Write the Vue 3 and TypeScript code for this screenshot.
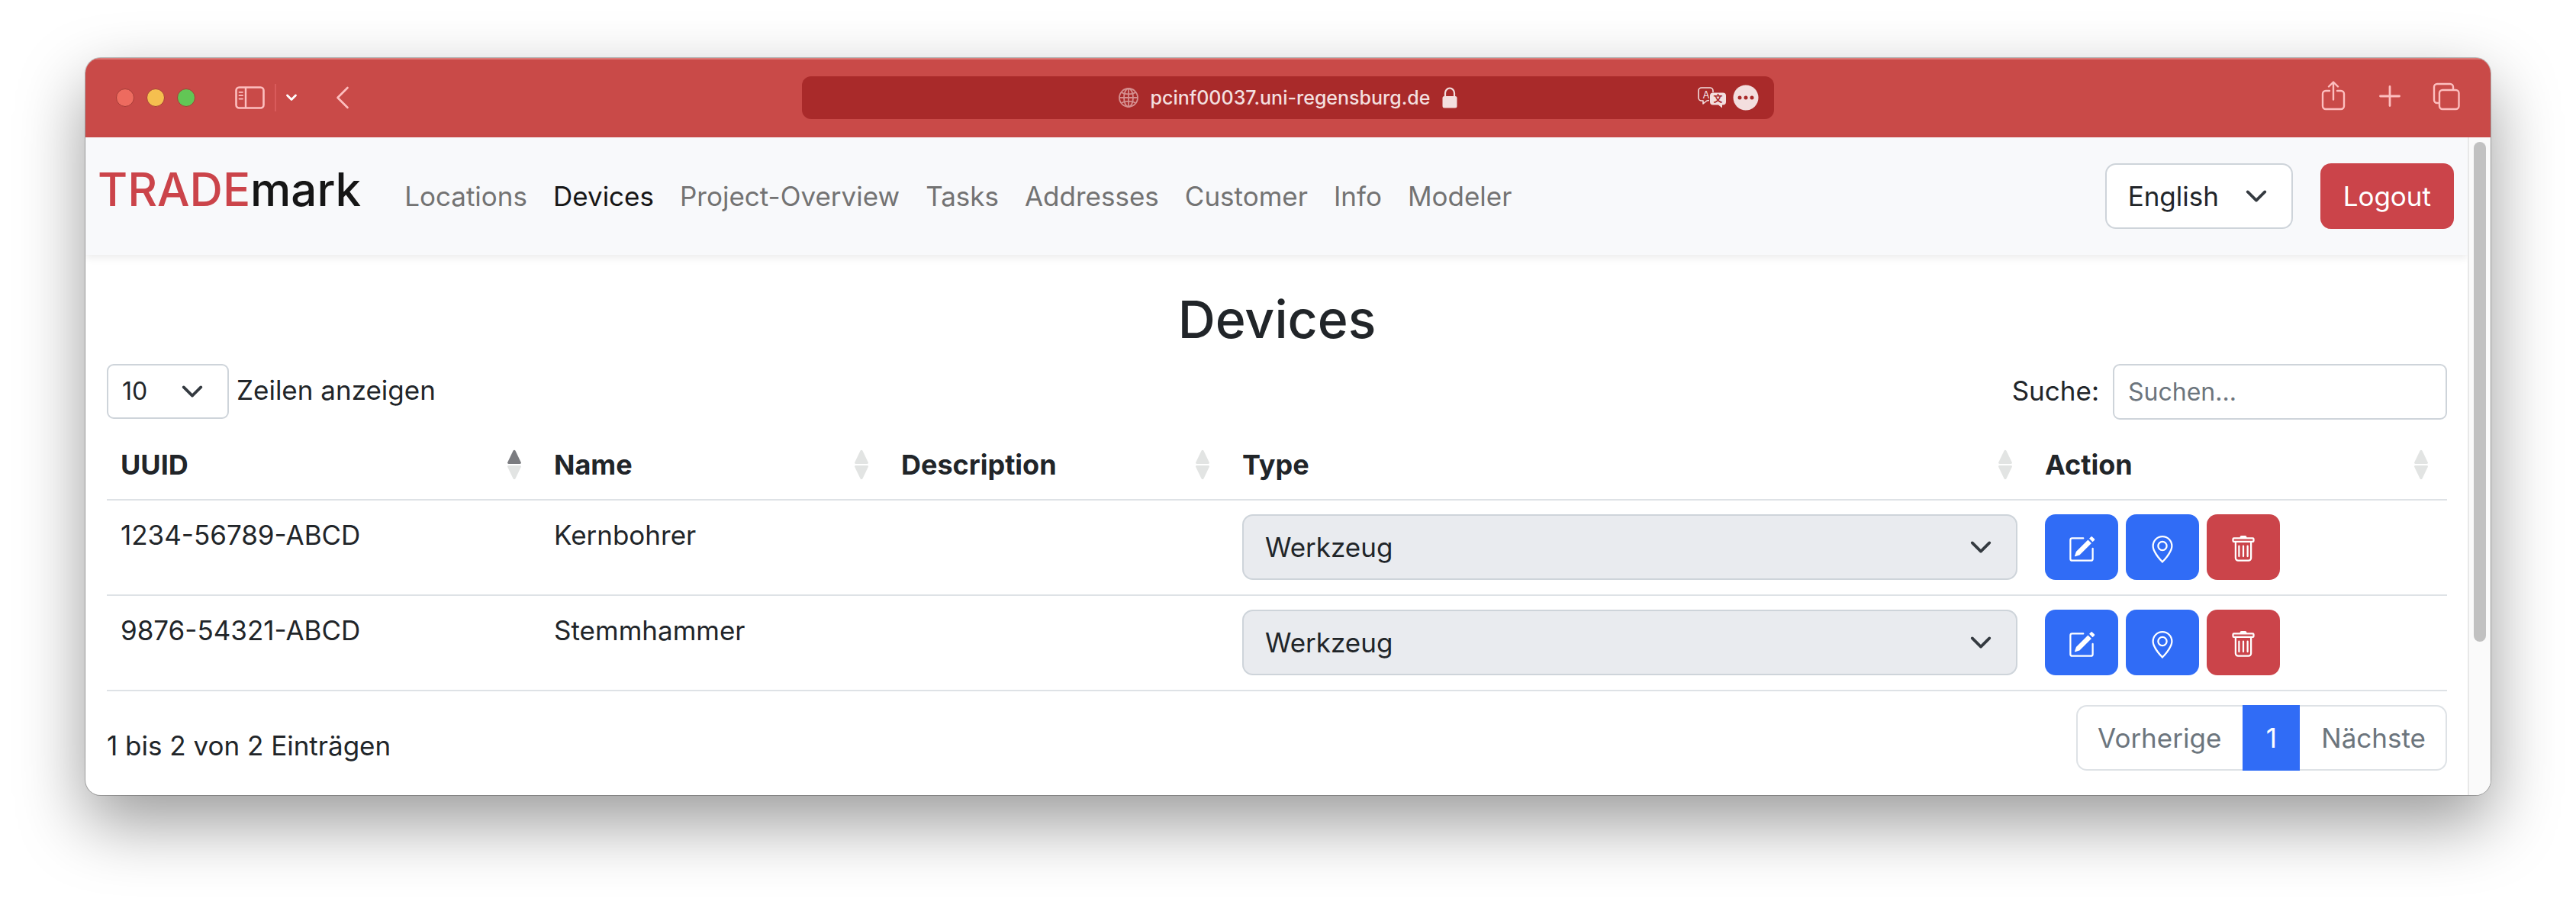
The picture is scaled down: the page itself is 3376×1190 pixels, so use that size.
<script setup lang="ts">
import { ref } from 'vue'

interface Column {
  label: string
  width: number
}

interface Device {
  uuid: string
  name: string
  description: string
  type: string
}

const navItems = ['Locations', 'Devices', 'Project-Overview', 'Tasks', 'Addresses', 'Customer', 'Info', 'Modeler']
const activeItem = ref('Devices')

const columns: Column[] = [
  { label: 'UUID', width: 568 },
  { label: 'Name', width: 455 },
  { label: 'Description', width: 447 },
  { label: 'Type', width: 1052 },
  { label: 'Action', width: 545 },
]
const totalWidth = columns.reduce((sum, c) => sum + c.width, 0)
const sortedColumn = ref('UUID')

const devices: Device[] = [
  { uuid: '1234-56789-ABCD', name: 'Kernbohrer', description: '', type: 'Werkzeug' },
  { uuid: '9876-54321-ABCD', name: 'Stemmhammer', description: '', type: 'Werkzeug' },
]

const language = ref('English')
const pageLength = ref('10')
const search = ref('')
</script>

<template>
  <div class="desktop">
    <div class="window">
      <header class="titlebar">
        <div class="tools">
          <div class="lights">
            <span class="light close"></span>
            <span class="light minimize"></span>
            <span class="light maximize"></span>
          </div>
          <button class="tool sidebar" type="button" aria-label="Sidebar">
            <svg width="40" height="30" viewBox="0 0 40 30" fill="none" stroke="currentColor">
              <rect x="1.5" y="1.5" width="36" height="27" rx="4" stroke-width="2.6" />
              <path d="M14 1.500V28.500" stroke-width="2.4" />
              <path d="M5.500 7.800h4.500M5.500 12.200h4.500M5.500 16.600h4.500" stroke-width="1.800" stroke-linecap="round" />
            </svg>
          </button>
          <span class="divider"></span>
          <button class="tool menu" type="button" aria-label="Tab groups">
            <svg width="16" height="12" viewBox="0 0 16 12" fill="none" stroke="currentColor" stroke-width="2.8" stroke-linecap="round" stroke-linejoin="round">
              <path d="M2.500 3l5.500 5.500L13.500 3" />
            </svg>
          </button>
          <button class="tool back" type="button" aria-label="Back">
            <svg width="18" height="30" viewBox="0 0 18 30" fill="none" stroke="currentColor" stroke-width="2.600" stroke-linecap="round" stroke-linejoin="round">
              <path d="M15.500 2L2.500 15l13 13" />
            </svg>
          </button>
        </div>

        <div class="address">
          <span></span>
          <div class="url">
            <svg class="globe" width="26" height="26" viewBox="0 0 26 26" fill="none" stroke="currentColor" stroke-width="1.800">
              <circle cx="13" cy="13" r="12" />
              <ellipse cx="13" cy="13" rx="6" ry="12" />
              <path d="M13 1v24M1 13h24M3.500 6c5 3.200 14 3.200 19 0M3.500 20c5-3.200 14-3.200 19 0" />
            </svg>
            <span>pcinf00037.uni-regensburg.de</span>
            <svg width="20" height="28" viewBox="0 0 20 28">
              <rect x="0.500" y="12" width="19" height="15.500" rx="2.500" fill="currentColor" />
              <path d="M4 13V8a6 6.500 0 0 1 12 0v5" fill="none" stroke="currentColor" stroke-width="2.200" />
            </svg>
          </div>
          <div class="url-actions">
            <svg width="38" height="28" viewBox="0 0 38 28">
              <path d="M15 17.500l-3 .5-5 4v-4H5a4 4 0 0 1-4-4V5a4 4 0 0 1 4-4h11a4 4 0 0 1 4 4v2" fill="none" stroke="currentColor" stroke-width="1.600" stroke-linejoin="round" />
              <text x="11" y="14.500" text-anchor="middle" font-size="13" fill="currentColor">A</text>
              <path d="M20 7.500h13a4 4 0 0 1 4 4v8a4 4 0 0 1-4 4h-1v4l-5-4h-7a4 4 0 0 1-4-4v-8a4 4 0 0 1 4-4z" fill="currentColor" />
              <text x="26.500" y="20" text-anchor="middle" font-size="12" font-weight="700" fill="#a92a2a">文</text>
            </svg>
            <svg width="34" height="34" viewBox="0 0 34 34">
              <circle cx="17" cy="17" r="16.500" fill="currentColor" />
              <g fill="#a92a2a">
                <circle cx="9" cy="17" r="2.500" />
                <circle cx="17" cy="17" r="2.500" />
                <circle cx="25" cy="17" r="2.500" />
              </g>
            </svg>
          </div>
        </div>

        <div class="tools end">
          <button class="tool" type="button" aria-label="Share">
            <svg width="36" height="40" viewBox="0 0 36 40" fill="none" stroke="currentColor" stroke-width="2.400" stroke-linecap="round" stroke-linejoin="round">
              <path d="M13 14H8a4 4 0 0 0-4 4v16a4 4 0 0 0 4 4h20a4 4 0 0 0 4-4V18a4 4 0 0 0-4-4h-5M18 25.500V3M12 8.500L18 2.500l6 6" />
            </svg>
          </button>
          <button class="tool" type="button" aria-label="New tab">
            <svg width="36" height="40" viewBox="0 0 36 40" fill="none" stroke="currentColor" stroke-width="2.800" stroke-linecap="round">
              <path d="M18 8.500v25M5.500 21h25" />
            </svg>
          </button>
          <button class="tool" type="button" aria-label="Tab overview">
            <svg width="36" height="40" viewBox="0 0 36 40" fill="none" stroke="currentColor" stroke-width="2.400">
              <rect x="9" y="13" width="25.500" height="25" rx="4" />
              <path d="M9 30H6a4 4 0 0 1-4-4V9a4 4 0 0 1 4-4h17a4 4 0 0 1 4 4v4" />
            </svg>
          </button>
        </div>
      </header>

      <div class="viewport">
        <div class="page">
          <nav class="navbar">
            <a class="brand" href="#"><span class="brand-accent">TRADE</span>mark</a>
            <ul class="nav-list">
              <li v-for="item in navItems" :key="item">
                <a class="nav-link" :class="{ active: item === activeItem }" href="#" @click.prevent="activeItem = item">{{ item }}</a>
              </li>
            </ul>
            <div class="nav-end">
              <div class="select language">
                <select v-model="language" aria-label="Language">
                  <option>English</option>
                  <option>Deutsch</option>
                </select>
                <svg class="chevron" viewBox="0 0 16 16" aria-hidden="true"><path d="m2 5 6 6 6-6" /></svg>
              </div>
              <button class="btn logout" type="button">Logout</button>
            </div>
          </nav>

          <main class="content">
            <h2>Devices</h2>

            <div class="controls">
              <div class="field">
                <div class="select small">
                  <select id="page-length" v-model="pageLength">
                    <option>10</option>
                    <option>25</option>
                    <option>50</option>
                  </select>
                  <svg class="chevron" viewBox="0 0 16 16" aria-hidden="true"><path d="m2 5 6 6 6-6" /></svg>
                </div>
                <label for="page-length">Zeilen anzeigen</label>
              </div>
              <div class="field search">
                <label for="search">Suche:</label>
                <input id="search" v-model="search" type="search" placeholder="Suchen..." />
              </div>
            </div>

            <table>
              <colgroup>
                <col v-for="c in columns" :key="c.label" :style="{ width: (c.width / totalWidth) * 100 + '%' }" />
              </colgroup>
              <thead>
                <tr>
                  <th v-for="c in columns" :key="c.label" scope="col">
                    <div class="head">
                      <span>{{ c.label }}</span>
                      <svg class="sort" :class="{ ascending: c.label === sortedColumn }" viewBox="0 0 20 40" aria-hidden="true">
                        <path class="up" d="M8.500 1.800q1.500-2.200 3 0L18.800 17q.6 2-1.300 2h-15q-1.900 0-1.300-2z" />
                        <path d="M8.500 38.200q1.500 2.200 3 0L18.800 23q.6-2-1.300-2h-15q-1.900 0-1.300 2z" />
                      </svg>
                    </div>
                  </th>
                </tr>
              </thead>
              <tbody>
                <tr v-for="d in devices" :key="d.uuid">
                  <td>{{ d.uuid }}</td>
                  <td>{{ d.name }}</td>
                  <td>{{ d.description }}</td>
                  <td>
                    <div class="select disabled">
                      <select disabled :aria-label="'Type of ' + d.name">
                        <option>{{ d.type }}</option>
                      </select>
                      <svg class="chevron" viewBox="0 0 16 16" aria-hidden="true"><path d="m2 5 6 6 6-6" /></svg>
                    </div>
                  </td>
                  <td>
                    <div class="actions">
                      <button class="btn icon primary" type="button" aria-label="Edit">
                        <svg viewBox="0 0 16 16" fill="currentColor">
                          <path d="M15.502 1.940a.5.5 0 0 1 0 .706L14.459 3.690l-2-2L13.502.646a.5.5 0 0 1 .707 0l1.293 1.293zm-1.750 2.456-2-2L4.939 9.210a.5.5 0 0 0-.121.196l-.805 2.414a.25.25 0 0 0 .316.316l2.414-.805a.5.5 0 0 0 .196-.120l6.813-6.814z" />
                          <path fill-rule="evenodd" d="M1 13.500A1.500 1.500 0 0 0 2.500 15h11a1.500 1.500 0 0 0 1.500-1.500v-6a.5.5 0 0 0-1 0v6a.5.5 0 0 1-.5.5h-11a.5.5 0 0 1-.5-.5v-11a.5.5 0 0 1 .5-.5H9a.5.5 0 0 0 0-1H2.500A1.500 1.500 0 0 0 1 2.500v11z" />
                        </svg>
                      </button>
                      <button class="btn icon primary" type="button" aria-label="Location">
                        <svg viewBox="0 0 16 16" fill="currentColor">
                          <path d="M12.166 8.940c-.524 1.062-1.234 2.120-1.960 3.070A31.493 31.493 0 0 1 8 14.580a31.481 31.481 0 0 1-2.206-2.570c-.726-.950-1.436-2.008-1.960-3.070C3.304 7.867 3 6.862 3 6a5 5 0 0 1 10 0c0 .862-.305 1.867-.834 2.940zM8 16s6-5.686 6-10A6 6 0 0 0 2 6c0 4.314 6 10 6 10z" />
                          <path d="M8 8a2 2 0 1 1 0-4 2 2 0 0 1 0 4zm0 1a3 3 0 1 0 0-6 3 3 0 0 0 0 6z" />
                        </svg>
                      </button>
                      <button class="btn icon danger" type="button" aria-label="Delete">
                        <svg viewBox="0 0 16 16" fill="currentColor">
                          <path d="M5.500 5.500A.5.5 0 0 1 6 6v6a.5.5 0 0 1-1 0V6a.5.5 0 0 1 .5-.5zm2.500 0a.5.5 0 0 1 .5.5v6a.5.5 0 0 1-1 0V6a.5.5 0 0 1 .5-.5zm3 .5a.5.5 0 0 0-1 0v6a.5.5 0 0 0 1 0V6z" />
                          <path fill-rule="evenodd" d="M14.500 3a1 1 0 0 1-1 1H13v9a2 2 0 0 1-2 2H5a2 2 0 0 1-2-2V4h-.5a1 1 0 0 1-1-1V2a1 1 0 0 1 1-1H6a1 1 0 0 1 1-1h2a1 1 0 0 1 1 1h3.500a1 1 0 0 1 1 1v1zM4.118 4 4 4.059V13a1 1 0 0 0 1 1h6a1 1 0 0 0 1-1V4.059L11.882 4H4.118zM2.500 3V2h11v1h-11z" />
                        </svg>
                      </button>
                    </div>
                  </td>
                </tr>
              </tbody>
            </table>

            <div class="footer">
              <p class="info">1 bis 2 von 2 Einträgen</p>
              <ul class="pagination">
                <li><a class="page-link" href="#">Vorherige</a></li>
                <li><a class="page-link current" href="#">1</a></li>
                <li><a class="page-link" href="#">Nächste</a></li>
              </ul>
            </div>
          </main>
        </div>

        <div class="scrollbar"><div class="thumb"></div></div>
      </div>
    </div>
  </div>
</template>

<style>
body {
  margin: 0;
  background: #fff;
}
</style>

<style scoped>
* {
  box-sizing: border-box;
}

.desktop {
  padding: 76px 112px 148px;
  overflow: hidden;
  font-family: Inter, 'Noto Sans CJK SC', sans-serif;
  font-size: 35px;
  line-height: 54px;
  color: #212529;
}

button,
select,
input {
  margin: 0;
  font: inherit;
  color: inherit;
}

a {
  color: inherit;
  text-decoration: none;
}

ul {
  margin: 0;
  padding: 0;
  list-style: none;
}

svg {
  display: block;
  flex: none;
}

.window {
  overflow: hidden;
  border-radius: 20px;
  background: #fff;
  box-shadow: 0 0 0 1px rgba(0, 0, 0, 0.25), 0 36px 88px rgba(0, 0, 0, 0.4);
}

/* Browser title bar */
.titlebar {
  display: grid;
  grid-template-columns: 1fr minmax(600px, 1274px) 1fr;
  align-items: center;
  height: 104px;
  background: #c94a48;
  box-shadow: inset 0 2px 0 #dc7a77;
  color: #fdbfbf;
}

.tools {
  display: flex;
  align-items: center;
  padding-left: 40px;
}

.tools.end {
  justify-content: flex-end;
  gap: 38px;
  padding: 0 40px 6px 0;
}

.lights {
  display: flex;
  gap: 16px;
  margin-right: 52px;
}

.light {
  width: 24px;
  height: 24px;
  border: 1px solid #a53c38;
  border-radius: 50%;
}

.close {
  background: #ed6b5f;
}

.minimize {
  background: #f5bf4f;
}

.maximize {
  background: #62c655;
}

.tool {
  padding: 0;
  border: 0;
  background: none;
}

.divider {
  width: 2px;
  height: 36px;
  margin: 0 12px;
  background: #d95b5b;
}

.menu {
  color: #fff;
}

.back {
  margin-left: 50px;
}

.address {
  display: grid;
  grid-template-columns: 1fr auto 1fr;
  align-items: center;
  height: 56px;
  padding: 0 20px;
  border-radius: 12px;
  background: #a92a2a;
  color: #f3dfdf;
}

.url {
  display: flex;
  align-items: center;
  gap: 16px;
  font-size: 25px;
  font-weight: 500;
  line-height: 32px;
}

.globe {
  color: #d58f8f;
}

.url-actions {
  display: flex;
  align-items: center;
  justify-content: flex-end;
  gap: 8px;
}

/* Page */
.viewport {
  display: flex;
}

.page {
  flex: 1;
  min-width: 0;
}

.scrollbar {
  width: 30px;
  padding: 6px;
  border-left: 2px solid #e8e8e8;
  background: #fafafa;
}

.thumb {
  width: 16px;
  height: 77%;
  border-radius: 8px;
  background: #c1c1c1;
}

.navbar {
  display: flex;
  align-items: baseline;
  padding: 34px 18px 34px 16px;
  background: #f8f9fb;
  box-shadow: 0 4px 10px rgba(0, 0, 0, 0.08);
}

.brand {
  margin-right: 40px;
  font-size: 60px;
  font-weight: 500;
  line-height: 64px;
  color: #161616;
}

.brand-accent {
  color: #cb444a;
}

.nav-list {
  display: flex;
  flex: 1;
}

.nav-link {
  display: block;
  padding: 16px 17px;
  color: #737373;
}

.nav-link.active {
  color: #161616;
}

.nav-end {
  display: flex;
  gap: 36px;
}

.select {
  display: grid;
  align-items: center;
}

.select select {
  grid-area: 1 / 1;
  width: 100%;
  height: 86px;
  padding: 0 84px 0 28px;
  border: 2px solid #ced4da;
  border-radius: 14px;
  background: #fff;
  appearance: none;
  opacity: 1;
}

.chevron {
  grid-area: 1 / 1;
  justify-self: end;
  width: 30px;
  height: 30px;
  margin-right: 33px;
  fill: none;
  stroke: #343a40;
  stroke-width: 2;
  stroke-linecap: round;
  stroke-linejoin: round;
  pointer-events: none;
}

.language {
  width: 246px;
}

.small {
  width: 160px;
}

.small select {
  height: 72px;
  padding: 0 60px 0 18px;
  border-radius: 9px;
  font-size: 32px;
}

.disabled select {
  background: #e9ebef;
}

.btn {
  display: flex;
  align-items: center;
  justify-content: center;
  height: 86px;
  padding: 0 30px;
  border: 0;
  border-radius: 14px;
  color: #fff;
}

.logout,
.danger {
  background: #cb444a;
}

.primary {
  background: #306cf6;
}

.icon {
  padding: 6px 30px 0;
}

.icon svg {
  width: 36px;
  height: 36px;
}

.content {
  padding: 40px 27px 32px 28px;
}

h2 {
  margin: 0 0 15px;
  font-size: 68px;
  font-weight: 500;
  line-height: 88px;
  text-align: center;
}

.controls {
  display: flex;
  align-items: flex-start;
  justify-content: space-between;
}

.field {
  display: flex;
  align-items: baseline;
  gap: 10px;
}

.search {
  gap: 18px;
}

.search input {
  width: 438px;
  height: 73px;
  padding: 0 18px;
  border: 2px solid #ced4da;
  border-radius: 9px;
  background: #fff;
  font-size: 32px;
  appearance: none;
}

.search input::placeholder {
  color: #6c757d;
  opacity: 1;
}

table {
  width: 100%;
  margin-top: 14px;
  border-spacing: 0;
  table-layout: fixed;
}

th,
td {
  padding: 18px 18px 19px;
  border-bottom: 2px solid #dee2e6;
  text-align: left;
  vertical-align: top;
}

th {
  padding-bottom: 18px;
  font-size: 36px;
  font-weight: 700;
}

.head {
  display: flex;
  align-items: center;
  justify-content: space-between;
}

.sort {
  width: 20px;
  height: 40px;
  margin-right: 6px;
  fill: #e2e4e3;
}

.ascending .up {
  fill: #7b7c80;
}

.actions {
  display: flex;
  gap: 10px;
}

.footer {
  display: flex;
  align-items: flex-start;
  justify-content: space-between;
  padding-top: 18px;
}

.info {
  margin: 0;
  padding-top: 26px;
}

.pagination {
  display: flex;
  overflow: hidden;
  border-radius: 14px;
  box-shadow: inset 0 0 0 2px #dee2e6;
}

.page-link {
  display: block;
  min-width: 75px;
  padding: 16px 28px;
  color: #6c757d;
  text-align: center;
}

.page-link.current {
  background: #306cf6;
  color: #fff;
}
</style>
